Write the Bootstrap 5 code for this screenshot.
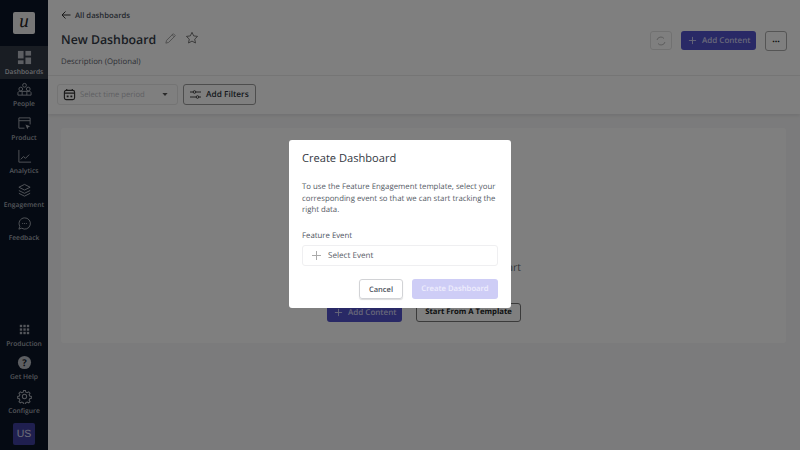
<!DOCTYPE html>
<html lang="en"><head><meta charset="utf-8"><title>New Dashboard</title>
<link href="https://cdn.jsdelivr.net/npm/bootstrap@5.3.0/dist/css/bootstrap.min.css" rel="stylesheet">
<style>
html,body{height:450px;overflow:hidden}
body{font-family:"Open Sans",sans-serif;background:#fff;color:#2f3540;font-size:8px;text-rendering:geometricPrecision}
svg{flex:none}
.shell{height:450px}
.side{width:48px;background:#0b1526;flex:none}
.brand{width:22px;height:22px;background:#eee;border-radius:2px;font-family:"Liberation Serif",serif;font-style:italic;font-size:19px;line-height:20px;text-align:center;color:#222;margin:12px auto 12px}
.sitem{height:33.4px;color:#a8adb6;font-size:6.7px;font-weight:600;line-height:10px;white-space:nowrap;padding-top:3px}
.sitem svg{width:15px;height:15px;display:block;margin:0 auto 2px}
.sitem.on{background:#333a47;color:#cfd3d9;padding-top:4px}
.avatar{width:22px;height:22px;background:#3f3f9e;color:#d7d8ee;font-family:"Liberation Sans",sans-serif;font-size:10.5px;line-height:22px;text-align:center;border-radius:2px;margin:4px auto 5px}
.top{height:76px;border-bottom:1px solid #ececec;padding:0 13px;flex:none}
.back{font-size:7.7px;font-weight:600;color:#4a505c;height:14px;line-height:14px;margin-top:8px}
.back span{padding-top:1px}
.ttl{font-size:12.3px;font-weight:600;color:#343a46;line-height:20px;margin-top:8px}
.ttl svg{margin-bottom:4px}
.desc{font-size:7.8px;color:#5a606c;line-height:12px;margin-top:6px}
.acts{padding-top:31px;gap:9px}
.btn-sync{width:22px;height:19px;border:1px solid #e2e2e2;border-radius:3px}
.btn-add{background:#5252cc;color:#cfcff2;font-size:8px;font-weight:600;border-radius:3px;height:19px;line-height:19px;border:0;padding:0 7px;gap:5px;width:75px;white-space:nowrap}
.btn-more{width:22px;height:20px;border:1px solid #aaa;border-radius:3px;font-size:9px;line-height:13px;font-weight:700;color:#222;text-align:center}
.filters{height:38px;padding:8px 9px;gap:5px;box-shadow:0 2px 3px rgba(0,0,0,.08);flex:none;position:relative}
.period{width:121px;height:21px;border:1px solid #e8e8e8;border-radius:3px;color:#bfc2c7;font-size:7.7px;padding:0 9px 0 5px}
.addf{width:73px;height:21px;border:1px solid #9a9a9a;border-radius:3px;font-size:8.3px;font-weight:600;color:#2f3540;padding:0 6px;gap:5px;white-space:nowrap}
.period span,.addf span{padding-top:2px}
.body-a{background:#f7f7f8;padding:14px 14px 0 13px}
.panel{height:215px;background:#fff;border-radius:3px;padding-top:132px}
.phint{font-size:10.5px;color:#6a6f78;line-height:16px;height:43px;width:460px;text-align:right;white-space:nowrap}
.pbtns{padding-left:266px;gap:14px}
.pbtn{height:19px;line-height:17px;border:1px solid #777;border-radius:3px;font-size:7.7px;font-weight:700;color:#1c1f26;width:105px;text-align:center;white-space:nowrap}
.dlg{position:absolute;left:289px;top:140px;width:222px;height:168px;background:#fff;border-radius:3px;padding:10px 13px;color:#4d535e;z-index:1060}
.dlg h2{font-size:11.1px;font-weight:400;color:#33383f;line-height:17px;margin:0 0 15px}
.dlg p{font-size:7.8px;line-height:11.7px;margin:0 0 13px;color:#555b66}
.lab{font-size:7.8px;line-height:12px;margin-bottom:3px}
.sel{height:21px;width:196px;border:1px solid #efeff1;border-radius:3px;font-size:8.1px;padding:0 9px;gap:3px;color:#555b66;font-weight:500}
.foot{gap:9px;margin-top:13px;padding-left:57px}
.cbtn{width:44px;height:20px;border:1px solid #d2d3d6;border-radius:3px;box-shadow:0 1px 1px #ddd;font-size:7.5px;font-weight:600;line-height:20px;text-align:center;color:#4d535e}
.cbtn2{width:86px;height:20px;border-radius:3px;background:#cecdf6;color:#eeeefd;font-size:7.7px;font-weight:600;line-height:21px;text-align:center;white-space:nowrap}
</style></head><body>
<div class="shell d-flex">
 <nav class="side d-flex flex-column text-center">
  <div class="brand">u</div>
  <div class="sitem on"><svg viewBox="0 0 16 16" fill="#b8bcc4"><rect x="1" y="1" width="6" height="8"/><rect x="9" y="1" width="6" height="5"/><rect x="1" y="11" width="6" height="4"/><rect x="9" y="8" width="6" height="7"/></svg>Dashboards</div>
  <div class="sitem"><svg viewBox="0 0 16 16" fill="none" stroke="#a8adb6"><circle cx="8" cy="3.500" r="2"/><circle cx="4" cy="7.500" r="2"/><circle cx="12" cy="7.500" r="2"/><path d="M1 14v-2.500c0-1 1-1.500 2-1.500h10c1 0 2 .5 2 1.500V14zM5.500 10v4M10.500 10v4"/></svg>People</div>
  <div class="sitem"><svg viewBox="0 0 16 16" fill="none" stroke="#a8adb6"><path d="M14 9V2H2v11h6M2 5h12"/><path d="M9 9l5 2-2 1-1 2z" fill="#a8adb6" stroke="none"/></svg>Product</div>
  <div class="sitem"><svg viewBox="0 0 16 16" fill="none" stroke="#a8adb6"><path d="M2 1v13h13"/><path d="M4 11l3-3 2 2 4-4"/></svg>Analytics</div>
  <div class="sitem"><svg viewBox="0 0 16 16" fill="none" stroke="#a8adb6"><path d="M8 1.500l6 3-6 3-6-3zM2 8l6 3 6-3M2 11l6 3 6-3"/></svg>Engagement</div>
  <div class="sitem"><svg viewBox="0 0 16 16" fill="none" stroke="#a8adb6"><path d="M8 2a6 6 0 1 1-3 11l-3 1 1-3a6 6 0 0 1 5-9z"/><path d="M5.500 8h1M7.500 8h1M9.500 8h1"/></svg>Feedback</div>
  <div class="mt-auto"></div>
  <div class="sitem"><svg viewBox="0 0 16 16" fill="#a8adb6"><rect x="3" y="3" width="2.500" height="2.500"/><rect x="6.800" y="3" width="2.500" height="2.500"/><rect x="10.500" y="3" width="2.500" height="2.500"/><rect x="3" y="6.800" width="2.500" height="2.500"/><rect x="6.800" y="6.800" width="2.500" height="2.500"/><rect x="10.500" y="6.800" width="2.500" height="2.500"/><rect x="3" y="10.500" width="2.500" height="2.500"/><rect x="6.800" y="10.500" width="2.500" height="2.500"/><rect x="10.500" y="10.500" width="2.500" height="2.500"/></svg>Production</div>
  <div class="sitem"><svg viewBox="0 0 16 16"><circle cx="8" cy="8" r="7" fill="#b8bcc4"/><text x="8" y="11.500" font-size="10" font-weight="700" text-anchor="middle" fill="#0b1526">?</text></svg>Get Help</div>
  <div class="sitem"><svg viewBox="0 0 16 16" fill="none" stroke="#a8adb6" stroke-width="1.100"><circle cx="8" cy="8" r="2.300"/><path d="M7 1.500h2l.4 1.800 1.500.7 1.600-1 1.400 1.500-1 1.500.6 1.500 1.800.5v2l-1.800.4-.6 1.500 1 1.600-1.400 1.400-1.600-1-1.500.6-.4 1.800H7l-.4-1.800-1.500-.6-1.600 1-1.400-1.400 1-1.600-.6-1.500-1.800-.4v-2l1.800-.5.6-1.500-1-1.500 1.400-1.500 1.600 1 1.500-.7z"/></svg>Configure</div>
  <div class="avatar">US</div>
 </nav>
 <main class="flex-grow-1 d-flex flex-column">
  <header class="top d-flex justify-content-between">
   <div>
    <div class="back d-flex align-items-center gap-1"><svg width="10" height="10" viewBox="0 0 10 10" fill="none" stroke="#333"><path d="M9.500 5H1M4.500 1.500L1 5l3.500 3.500"/></svg><span>All dashboards</span></div>
    <div class="ttl d-flex align-items-center gap-2"><span>New Dashboard</span>
     <svg width="13" height="13" viewBox="0 0 14 14" fill="none" stroke="#999"><path d="M2 12l.8-3L10 1.800l2.200 2.200L5 11.200zM8.800 3l2.200 2.200"/></svg>
     <svg width="14" height="14" viewBox="0 0 14 14" fill="none" stroke="#777"><path d="M7 1.300l1.700 3.600 3.900.5-2.900 2.700.8 3.900L7 10.100 3.500 12l.8-3.900L1.400 5.400l3.900-.5z"/></svg></div>
    <div class="desc">Description (Optional)</div>
   </div>
   <div class="acts d-flex align-items-start">
    <div class="btn-sync d-flex align-items-center justify-content-center"><svg width="10" height="10" viewBox="0 0 10 10" fill="none" stroke="#bbb"><path d="M1 4a4 4 0 0 1 7-1.500M9 6a4 4 0 0 1-7 1.500"/></svg></div>
    <div class="btn-add d-flex align-items-center"><svg width="9" height="9" viewBox="0 0 10 10" stroke="#cfcff2"><path d="M5 1v8M1 5h8"/></svg><span>Add Content</span></div>
    <div class="btn-more">...</div>
   </div>
  </header>
  <section class="filters d-flex">
   <div class="period d-flex align-items-center"><svg width="13" height="13" viewBox="0 0 14 14" fill="none" stroke="#333" stroke-width="1.200"><rect x="1.500" y="2.500" width="11" height="10" rx="2"/><path d="M1.500 5.500h11M4 1v2M10 1v2"/><path d="M4 8h2v2H4zM8 8h2v2H8z" fill="#333" stroke="none"/></svg><span class="ms-1 flex-grow-1">Select time period</span><svg width="6" height="3" viewBox="0 0 7 4" fill="#555"><path d="M0 0h7L3.500 4z"/></svg></div>
   <div class="addf d-flex align-items-center"><svg width="11" height="11" viewBox="0 0 11 11" fill="none" stroke="#444"><path d="M0 3h3M6 3h5M0 8h6M9 8h2"/><circle cx="4.500" cy="3" r="1.300"/><circle cx="7.500" cy="8" r="1.300"/></svg><span>Add Filters</span></div>
  </section>
  <section class="body-a flex-grow-1">
   <div class="panel">
    <div class="phint">Choose how you'd like to start</div>
    <div class="pbtns d-flex">
     <div class="btn-add d-flex align-items-center"><svg width="9" height="9" viewBox="0 0 10 10" stroke="#cfcff2"><path d="M5 1v8M1 5h8"/></svg><span>Add Content</span></div>
     <div class="pbtn">Start From A Template</div>
    </div>
   </div>
  </section>
 </main>
</div>
<div class="modal-backdrop show"></div>
<div class="dlg" role="dialog">
 <h2>Create Dashboard</h2>
 <p>To use the Feature Engagement template, select your corresponding event so that we can start tracking the right data.</p>
 <div class="lab">Feature Event</div>
 <div class="sel d-flex align-items-center"><svg width="9" height="9" viewBox="0 0 9 9" stroke="#aaa"><path d="M4.500 0v9M0 4.500h9"/></svg><span class="ms-1">Select Event</span></div>
 <div class="foot d-flex"><div class="cbtn">Cancel</div><div class="cbtn2">Create Dashboard</div></div>
</div>
</body></html>
